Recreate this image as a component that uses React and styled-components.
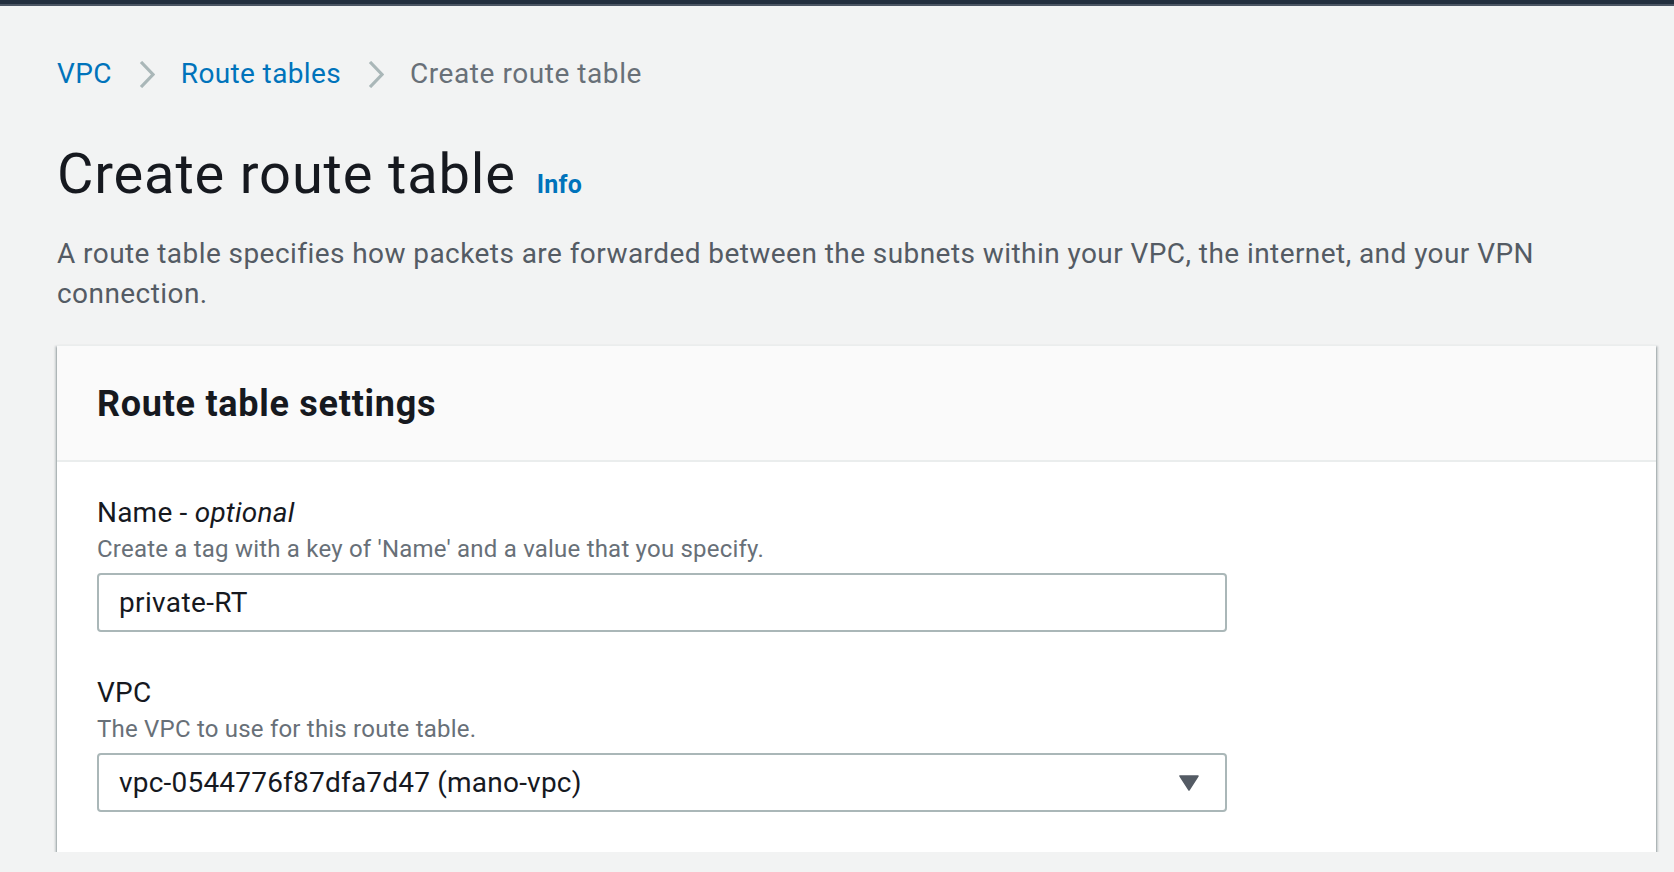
import React from "react";
import styled, { createGlobalStyle } from "styled-components";

const GlobalStyle = createGlobalStyle`
  html, body {
    margin: 0;
    padding: 0;
    background: #f2f3f3;
    font-family: Roboto, "Noto Sans", Arial, sans-serif;
    letter-spacing: 0.013em;
    color: #16191f;
  }
  * {
    box-sizing: border-box;
  }
`;

const Chevron = () => (
  <svg width="16" height="27" viewBox="0 0 16 27" fill="none">
    <polyline
      points="2,1 14,13.5 2,26"
      stroke="#aab7b8"
      strokeWidth="3.2"
      strokeLinejoin="miter"
    />
  </svg>
);

const Caret = () => (
  <svg width="20" height="16" viewBox="0 0 20 16">
    <path d="M1 1 H19 L10 15 Z" fill="#545b64" stroke="#545b64" strokeWidth="1.5" strokeLinejoin="round" />
  </svg>
);

const App = () => {
  return (
    <>
      <GlobalStyle />
      <TopBar />
      <Main>
        <Breadcrumbs>
          <Crumb href="#">VPC</Crumb>
          <Separator>
            <Chevron />
          </Separator>
          <Crumb href="#">Route tables</Crumb>
          <Separator>
            <Chevron />
          </Separator>
          <Crumb as="span" current>
            Create route table
          </Crumb>
        </Breadcrumbs>

        <TitleRow>
          <Title>Create route table</Title>
          <InfoLink href="#">Info</InfoLink>
        </TitleRow>
        <Intro>
          A route table specifies how packets are forwarded between the subnets
          within your VPC, the internet, and your VPN connection.
        </Intro>

        <Panel>
          <PanelHeader>
            <h2>Route table settings</h2>
          </PanelHeader>
          <PanelBody>
            <Field>
              <Label>
                Name - <em>optional</em>
              </Label>
              <Hint>Create a tag with a key of 'Name' and a value that you specify.</Hint>
              <Input defaultValue="private-RT" />
            </Field>
            <Field>
              <Label>VPC</Label>
              <Hint>The VPC to use for this route table.</Hint>
              <Select>
                <span>vpc-0544776f87dfa7d47 (mano-vpc)</span>
                <Caret />
              </Select>
            </Field>
          </PanelBody>
        </Panel>
      </Main>
    </>
  );
};

//styled components
const TopBar = styled.div`
  height: 6px;
  background: #232f3e;
  border-bottom: 2px solid #4b5563;
`;

const Main = styled.main`
  padding: 48px 18px 0 57px;
`;

const Breadcrumbs = styled.nav`
  display: flex;
  align-items: center;
  height: 40px;
  font-size: 28px;
  line-height: 40px;
`;

const Crumb = styled.a`
  color: ${(p) => (p.current ? "#687078" : "#0073bb")};
  letter-spacing: ${(p) => (p.current ? "0.02em" : "0.013em")};
  text-decoration: none;
`;

const Separator = styled.span`
  display: flex;
  align-items: center;
  margin: 0 26px 0 27px;
`;

const TitleRow = styled.div`
  display: flex;
  align-items: baseline;
  margin-top: 44px;
`;

const Title = styled.h1`
  margin: 0;
  font-size: 56px;
  line-height: 72px;
  font-weight: 400;
  letter-spacing: 0.015em;
  color: #16191f;
`;

const InfoLink = styled.a`
  margin-left: 21px;
  font-size: 25px;
  font-weight: 700;
  color: #0073bb;
  text-decoration: none;
`;

const Intro = styled.p`
  margin: 24px 0 0;
  max-width: 1560px;
  font-size: 28px;
  line-height: 40px;
  letter-spacing: 0.0155em;
  color: #545b64;
`;

const Panel = styled.section`
  margin-top: 31px;
  background: #ffffff;
  box-shadow: 0 2px 2px 0 rgba(0, 28, 36, 0.5), 2px 1px 2px 0 rgba(0, 28, 36, 0.15),
    -2px 1px 2px 0 rgba(0, 28, 36, 0.15);
  border-top: 1px solid #eaeded;
`;

const PanelHeader = styled.header`
  background: #fafafa;
  border-bottom: 2px solid #eaeded;
  padding: 36px 40px 34px;
  h2 {
    margin: 0;
    font-size: 36px;
    line-height: 44px;
    font-weight: 700;
    letter-spacing: 0.02em;
    color: #16191f;
  }
`;

const PanelBody = styled.div`
  padding: 31px 40px 40px;
  display: flex;
  flex-direction: column;
  gap: 41px;
`;

const Field = styled.div`
  display: flex;
  flex-direction: column;
`;

const Label = styled.label`
  font-size: 28px;
  line-height: 40px;
  color: #16191f;
  em {
    font-style: italic;
  }
`;

const Hint = styled.div`
  font-size: 24px;
  line-height: 32px;
  color: #687078;
  margin-bottom: 8px;
`;

const Input = styled.input`
  width: 1130px;
  height: 59px;
  padding: 0 20px;
  border: 2px solid #aab7b8;
  border-radius: 4px;
  font-family: inherit;
  font-size: 28px;
  letter-spacing: 0.013em;
  color: #16191f;
  background: #ffffff;
  outline: none;
`;

const Select = styled.div`
  width: 1130px;
  height: 59px;
  padding: 0 26px 0 20px;
  border: 2px solid #aab7b8;
  border-radius: 4px;
  display: flex;
  align-items: center;
  justify-content: space-between;
  font-size: 28px;
  color: #16191f;
  background: #ffffff;
`;

export default App;
